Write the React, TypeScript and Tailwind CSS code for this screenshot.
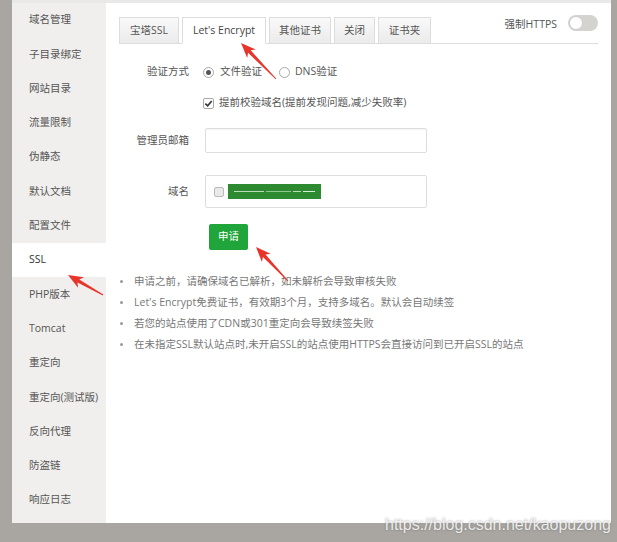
import React from "react";

const menu = [
  "域名管理",
  "子目录绑定",
  "网站目录",
  "流量限制",
  "伪静态",
  "默认文档",
  "配置文件",
  "SSL",
  "PHP版本",
  "Tomcat",
  "重定向",
  "重定向(测试版)",
  "反向代理",
  "防盗链",
  "响应日志",
];

const tabs = [
  { label: "宝塔SSL", w: "w-[60px]" },
  { label: "Let's Encrypt", w: "w-[84px]" },
  { label: "其他证书", w: "w-[62px]" },
  { label: "关闭", w: "w-[41px]" },
  { label: "证书夹", w: "w-[53px]" },
];

const notes = [
  "申请之前，请确保域名已解析，如未解析会导致审核失败",
  "Let's Encrypt免费证书，有效期3个月，支持多域名。默认会自动续签",
  "若您的站点使用了CDN或301重定向会导致续签失败",
  "在未指定SSL默认站点时,未开启SSL的站点使用HTTPS会直接访问到已开启SSL的站点",
];

// red annotation arrow, tip -> tail
const arrowPoints = (tx: number, ty: number, sx: number, sy: number) => {
  const len = Math.hypot(sx - tx, sy - ty);
  const ux = (sx - tx) / len;
  const uy = (sy - ty) / len;
  const nx = -uy;
  const ny = ux;
  const head = 15;
  const half = 6;
  const bx = tx + ux * head;
  const by = ty + uy * head;
  const ix = tx + ux * head * 0.8;
  const iy = ty + uy * head * 0.8;
  const pts = [
    [tx, ty],
    [bx + nx * half, by + ny * half],
    [ix + nx * 1.8, iy + ny * 1.8],
    [sx + nx * 0.5, sy + ny * 0.5],
    [sx - nx * 0.5, sy - ny * 0.5],
    [ix - nx * 1.8, iy - ny * 1.8],
    [bx - nx * half, by - ny * half],
  ];
  return pts.map((p) => p.join(",")).join(" ");
};

const Radio = ({ checked }: { checked?: boolean }) => (
  <span className="flex h-[11px] w-[11px] items-center justify-center rounded-full border border-[#a8a8a8] bg-white">
    {checked && <span className="h-[5px] w-[5px] rounded-full bg-[#555]" />}
  </span>
);

const App = () => {
  return (
    <div
      className="relative h-[542px] w-[617px] overflow-hidden bg-[#a9a6a1] text-[10.5px] text-[#555]"
      style={{ fontFamily: '"Open Sans", "Noto Sans CJK SC", sans-serif' }}
    >
      <div className="ml-[12px] flex h-[523px] w-[599px] border-t-[3px] border-[#e9e9e9] bg-white">
        {/* Sidebar */}
        <div className="w-[94px] bg-[#f0efed]">
          {menu.map((item) => (
            <div
              key={item}
              className={`flex h-[34.3px] items-center pl-[17px] ${item === "SSL" ? "bg-white text-[#333]" : ""}`}
            >
              {item}
            </div>
          ))}
        </div>

        {/* Content */}
        <div className="flex-1 px-[13px] pt-[13px]">
          <div className="flex h-[28px] items-end border-b border-[#ddd]">
            <div className="flex gap-[3px]">
              {tabs.map((t, i) => (
                <div
                  key={t.label}
                  className={`-mb-px flex h-[27px] items-center justify-center border border-[#ddd] ${t.w} ${
                    i === 1 ? "border-b-white bg-white text-[#444]" : "bg-linear-to-b from-[#f9f9f9] to-[#ebebeb]"
                  }`}
                >
                  {t.label}
                </div>
              ))}
            </div>
            <div className="mb-[10px] ml-auto flex items-center gap-[11px] self-end">
              <span className="mt-[5px]">强制HTTPS</span>
              <span className="flex h-[16px] w-[30px] items-center rounded-full bg-[#d5d3cf] px-[1px]">
                <span className="h-[14px] w-[14px] rounded-full border border-[#ccc] bg-white" />
              </span>
            </div>
          </div>

          {/* Form */}
          <div className="mt-[18px] flex h-[20px] items-center gap-[14px]">
            <div className="w-[70px] text-right">验证方式</div>
            <div className="flex items-center">
              <Radio checked />
              <span className="ml-[6px]">文件验证</span>
              <span className="ml-[17px]">
                <Radio />
              </span>
              <span className="ml-[5px]">DNS验证</span>
            </div>
          </div>

          <div className="mt-[11px] flex h-[20px] items-center pl-[84px]">
            <span className="flex h-[11px] w-[11px] items-center justify-center rounded-[2px] border border-[#a8a8a8] bg-white">
              <svg viewBox="0 0 10 10" className="h-[9px] w-[9px]">
                <path d="M1.5 5.2 L4 7.6 L8.6 2.2" fill="none" stroke="#333" strokeWidth="1.8" />
              </svg>
            </span>
            <span className="ml-[5px]">提前校验域名(提前发现问题,减少失败率)</span>
          </div>

          <div className="mt-[15px] flex items-center gap-[16px]">
            <div className="w-[70px] text-right">管理员邮箱</div>
            <div className="h-[25px] w-[222px] rounded-[2px] border border-[#ddd] shadow-[inset_0_1px_1px_rgba(0,0,0,0.04)]" />
          </div>

          <div className="mt-[22px] flex items-center gap-[16px]">
            <div className="w-[70px] text-right">域名</div>
            <div className="flex h-[33px] w-[222px] items-center rounded-[2px] border border-[#ddd] pl-[8px]">
              <span className="h-[10px] w-[10px] rounded-[2px] border border-[#bbb] bg-[#e9e9e9]" />
              <span className="ml-[4px] flex h-[15px] w-[93px] items-center gap-[2px] bg-[#2d8a30] px-[6px]">
                <span className="h-px w-[30px] bg-[#b9dcba]" />
                <span className="h-px w-[26px] bg-[#8fc591]" />
                <span className="h-px w-[8px] bg-[#b9dcba]" />
                <span className="h-px w-[12px] bg-[#d6ebd6]" />
              </span>
            </div>
          </div>

          <div className="mt-[16px] pl-[90px]">
            <button className="flex h-[26px] w-[39px] items-center justify-center rounded-[2px] bg-[#20a53a] text-[10.5px] text-white">
              申请
            </button>
          </div>

          <ul className="mt-[21px]">
            {notes.map((n) => (
              <li key={n} className="flex h-[21px] items-center text-[#777]">
                <span className="ml-[1px] mr-[11px] h-[3px] w-[3px] rounded-full bg-[#999]" />
                {n}
              </li>
            ))}
          </ul>
        </div>
      </div>

      {/* watermark */}
      <div
        className="absolute left-[385px] top-[513px] text-[16px] text-white/85 [text-shadow:0_0_2px_rgba(80,80,80,0.7)]"
        style={{ fontFamily: '"Liberation Sans", sans-serif' }}
      >
        https://blog.csdn.net/kaopuzong
      </div>

      {/* annotation arrows */}
      <svg className="pointer-events-none absolute inset-0" width="617" height="542">
        <polygon points={arrowPoints(241, 43, 276, 79)} fill="#e8352b" />
        <polygon points={arrowPoints(256, 247, 288, 281)} fill="#e8352b" />
        <polygon points={arrowPoints(68, 275, 103, 295)} fill="#e8352b" />
      </svg>
    </div>
  );
};

export default App;
